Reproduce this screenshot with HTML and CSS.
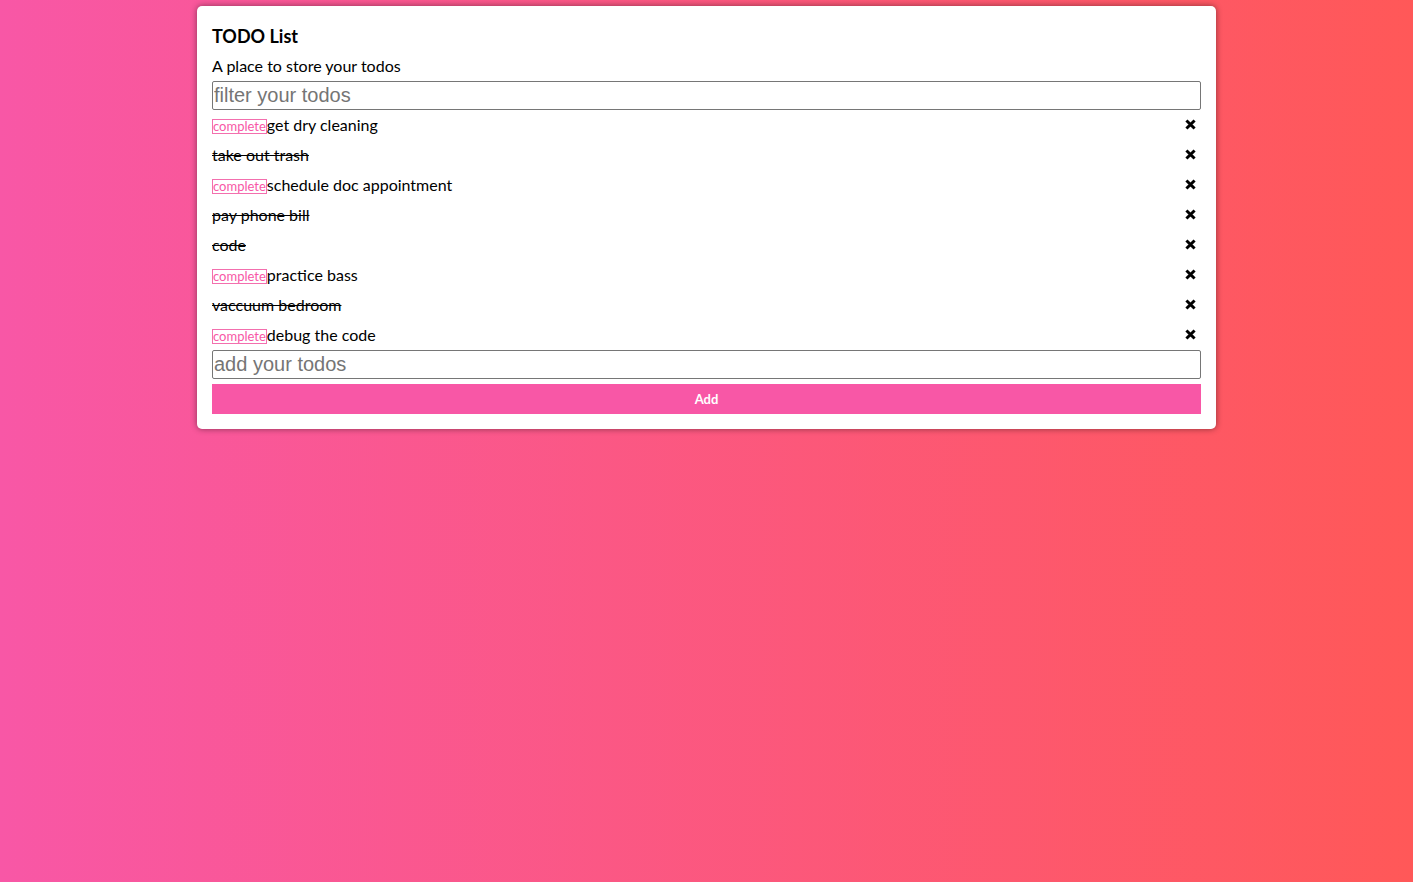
FILE: index.html
```html
<!DOCTYPE html>
<html>
<head>
<meta charset="utf-8">
<link rel="stylesheet" href="styles.css">
</head>
<body>
<div class="card">
  <h1 class="title">TODO List</h1>
  <p class="subtitle">A place to store your todos</p>
  <input class="field" type="text" placeholder="filter your todos">
  <ul class="list">
    <li class="item"><span class="label"><button class="complete">complete</button>get dry cleaning</span><span class="del"><svg viewBox="0 0 10 10" width="11" height="11"><path d="M1.3 1.3L8.7 8.7M8.7 1.3L1.3 8.7" stroke="#000" stroke-width="2.7"/></svg></span></li>
    <li class="item"><span class="label done">take out trash</span><span class="del"><svg viewBox="0 0 10 10" width="11" height="11"><path d="M1.3 1.3L8.7 8.7M8.7 1.3L1.3 8.7" stroke="#000" stroke-width="2.7"/></svg></span></li>
    <li class="item"><span class="label"><button class="complete">complete</button>schedule doc appointment</span><span class="del"><svg viewBox="0 0 10 10" width="11" height="11"><path d="M1.3 1.3L8.7 8.7M8.7 1.3L1.3 8.7" stroke="#000" stroke-width="2.7"/></svg></span></li>
    <li class="item"><span class="label done">pay phone bill</span><span class="del"><svg viewBox="0 0 10 10" width="11" height="11"><path d="M1.3 1.3L8.7 8.7M8.7 1.3L1.3 8.7" stroke="#000" stroke-width="2.7"/></svg></span></li>
    <li class="item"><span class="label done">code</span><span class="del"><svg viewBox="0 0 10 10" width="11" height="11"><path d="M1.3 1.3L8.7 8.7M8.7 1.3L1.3 8.7" stroke="#000" stroke-width="2.7"/></svg></span></li>
    <li class="item"><span class="label"><button class="complete">complete</button>practice bass</span><span class="del"><svg viewBox="0 0 10 10" width="11" height="11"><path d="M1.3 1.3L8.7 8.7M8.7 1.3L1.3 8.7" stroke="#000" stroke-width="2.7"/></svg></span></li>
    <li class="item"><span class="label done">vaccuum bedroom</span><span class="del"><svg viewBox="0 0 10 10" width="11" height="11"><path d="M1.3 1.3L8.7 8.7M8.7 1.3L1.3 8.7" stroke="#000" stroke-width="2.7"/></svg></span></li>
    <li class="item"><span class="label"><button class="complete">complete</button>debug the code</span><span class="del"><svg viewBox="0 0 10 10" width="11" height="11"><path d="M1.3 1.3L8.7 8.7M8.7 1.3L1.3 8.7" stroke="#000" stroke-width="2.7"/></svg></span></li>
  </ul>
  <input class="field" type="text" placeholder="add your todos">
  <button class="add">Add</button>
</div>
</body>
</html>
```
FILE: styles.css
```css
html, body {
  margin: 0;
  padding: 0;
  height: 100%;
}
body {
  background: linear-gradient(to right, #f857a6, #ff5858);
  font-family: Lato, "Noto Sans", sans-serif;
  color: #000;
}
.card {
  width: 1019px;
  box-sizing: border-box;
  margin: 6px auto 0;
  background: #fff;
  border-radius: 5px;
  padding: 15px;
  box-shadow: 0 0 6px rgba(0, 0, 0, 0.45);
  display: flex;
  flex-direction: column;
}
.title {
  margin: 0;
  font-size: 18px;
  font-weight: 700;
  line-height: 30px;
}
.subtitle {
  margin: 0;
  font-size: 16px;
  line-height: 30px;
}
.field {
  box-sizing: border-box;
  width: 100%;
  height: 29px;
  margin: 0;
  padding: 0 1px;
  border: 1px solid #767676;
  border-radius: 2px;
  font-family: "Liberation Sans", Arial, sans-serif;
  font-size: 20px;
  outline: none;
}
.field::placeholder {
  color: #757575;
}
.list {
  list-style: none;
  margin: 0;
  padding: 0;
}
.item {
  height: 30px;
  display: flex;
  align-items: center;
  justify-content: space-between;
  font-size: 16px;
}
.label {
  display: block;
  line-height: 18px;
  margin-bottom: 1px;
}
.done {
  text-decoration: line-through;
}
.complete {
  display: inline-block;
  vertical-align: baseline;
  font-family: Lato, "Noto Sans", sans-serif;
  font-size: 13px;
  color: #f857a6;
  background: #fff;
  border: 1px solid #f36fae;
  padding: 0;
  margin: 0;
  height: 15px;
  line-height: 13px;
}
.del {
  display: flex;
  align-items: center;
  margin-right: 5px;
  margin-bottom: 2px;
}
.add {
  margin-top: 5px;
  height: 30px;
  border: none;
  background: #f857a6;
  color: #fff;
  font-family: Lato, "Noto Sans", sans-serif;
  font-size: 13px;
  font-weight: 700;
}
```
